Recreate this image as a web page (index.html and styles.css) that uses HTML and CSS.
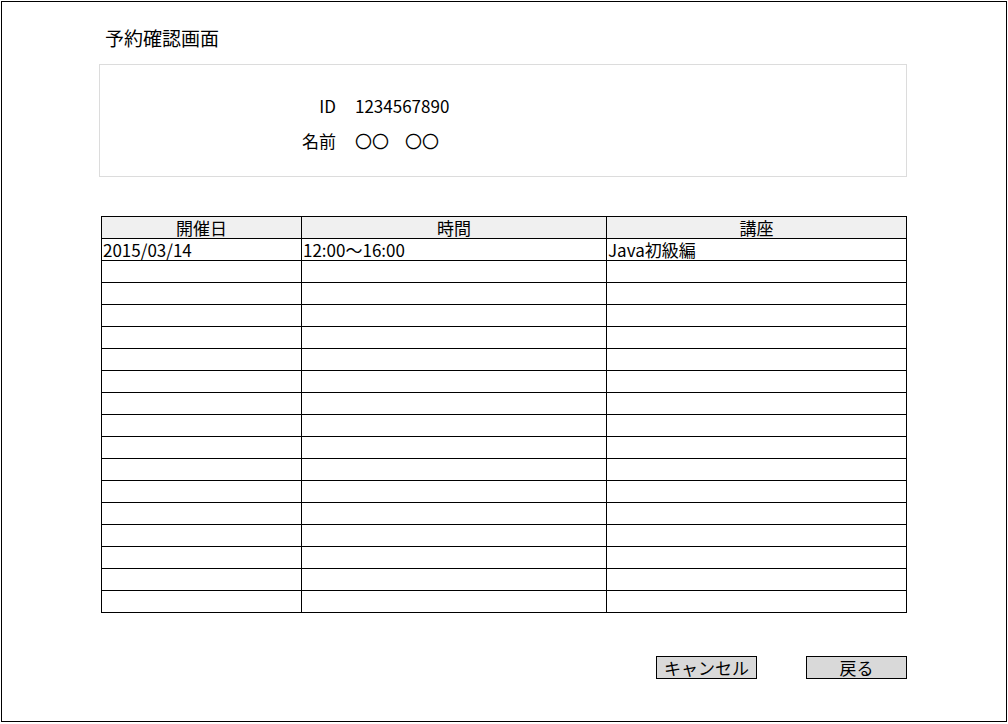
FILE: index.html
```html
<!DOCTYPE html>
<html lang="ja">
<head>
<meta charset="utf-8">
<title>予約確認画面</title>
<link rel="stylesheet" href="styles.css">
</head>
<body>
<div class="frame">
  <h1 class="title">予約確認画面</h1>

  <div class="info">
    <div class="info-grid">
      <span class="label">ID</span><span class="value">1234567890</span>
      <span class="label">名前</span><span class="value">〇〇<span class="name-gap"></span>〇〇</span>
    </div>
  </div>

  <table class="list">
    <colgroup>
      <col class="c1"><col class="c2"><col class="c3">
    </colgroup>
    <thead>
      <tr><th>開催日</th><th>時間</th><th>講座</th></tr>
    </thead>
    <tbody>
      <tr><td>2015/03/14</td><td>12:00〜16:00</td><td>Java初級編</td></tr>
      <tr><td></td><td></td><td></td></tr>
      <tr><td></td><td></td><td></td></tr>
      <tr><td></td><td></td><td></td></tr>
      <tr><td></td><td></td><td></td></tr>
      <tr><td></td><td></td><td></td></tr>
      <tr><td></td><td></td><td></td></tr>
      <tr><td></td><td></td><td></td></tr>
      <tr><td></td><td></td><td></td></tr>
      <tr><td></td><td></td><td></td></tr>
      <tr><td></td><td></td><td></td></tr>
      <tr><td></td><td></td><td></td></tr>
      <tr><td></td><td></td><td></td></tr>
      <tr><td></td><td></td><td></td></tr>
      <tr><td></td><td></td><td></td></tr>
      <tr><td></td><td></td><td></td></tr>
      <tr><td></td><td></td><td></td></tr>
    </tbody>
  </table>

  <div class="actions">
    <button class="btn" type="button">キャンセル</button>
    <button class="btn" type="button">戻る</button>
  </div>
</div>
</body>
</html>
```

FILE: styles.css
```css
html, body {
  margin: 0;
  padding: 0;
  background: #ffffff;
}

body {
  font-family: "Noto Sans CJK JP", "Liberation Sans", sans-serif;
  font-size: 17px;
  color: #000000;
}

.frame {
  box-sizing: border-box;
  margin: 1px 0 0 1px;
  width: 1006px;
  height: 721px;
  border: 1px solid #000000;
  display: flex;
  flex-direction: column;
}

.title {
  margin: 24px 0 0 103px;
  font-size: 19px;
  font-weight: normal;
  line-height: 24px;
}

.info {
  box-sizing: border-box;
  margin: 14px 0 0 97px;
  width: 808px;
  height: 113px;
  border: 1px solid #dcdcdc;
  padding-top: 29px;
}

.info-grid {
  display: grid;
  grid-template-columns: 236px auto;
  column-gap: 19px;
  row-gap: 11px;
  line-height: 24px;
}

.info-grid .label {
  text-align: right;
}

.name-gap {
  display: inline-block;
  width: 16px;
}

.list {
  margin: 39px 0 0 99px;
  width: 805px;
  border-collapse: collapse;
  table-layout: fixed;
  font-size: 17px;
}

.list .c1 { width: 200px; }
.list .c2 { width: 305px; }
.list .c3 { width: 300px; }

.list th,
.list td {
  border: 1px solid #000000;
  height: 21px;
  padding: 0 0 0 1px;
  line-height: 21px;
  font-weight: normal;
  white-space: nowrap;
  text-align: left;
}

.list th {
  background: #f0f0f0;
  text-align: center;
  padding: 0;
}

.actions {
  display: flex;
  justify-content: flex-end;
  gap: 49px;
  margin: 43px 99px 0 0;
}

.btn {
  box-sizing: border-box;
  width: 101px;
  height: 23px;
  padding: 0;
  border: 1px solid #000000;
  border-radius: 0;
  background: #d9d9d9;
  font-family: inherit;
  font-size: 17px;
  line-height: 21px;
  color: #000000;
}
```
